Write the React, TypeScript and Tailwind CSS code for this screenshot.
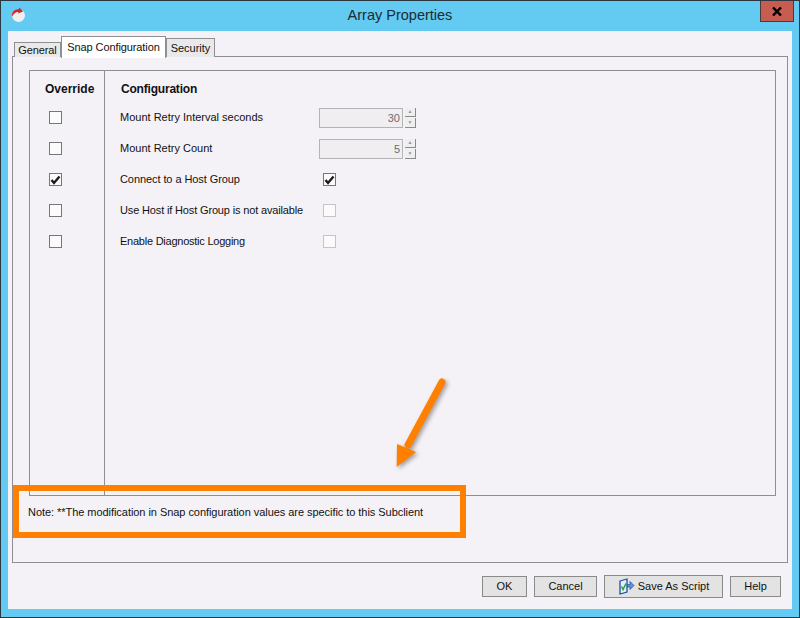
const font = "font-['Liberation_Sans',sans-serif]";

const Box = ({ checked, disabled }: { checked?: boolean; disabled?: boolean }) => (
  <div
    className={`w-[13px] h-[13px] flex items-center justify-center border bg-[#fbfbfb] ${
      disabled ? "border-[#c4c4c6]" : "border-[#77777a]"
    }`}
  >
    {checked && (
      <svg width="11" height="10" viewBox="0 0 11 10">
        <path d="M1.500 5l2.500 3L9.500 1.500" fill="none" stroke="#1c1c1c" strokeWidth="2.400" />
      </svg>
    )}
  </div>
);

const Spinner = ({ value }: { value: string }) => (
  <div className="flex items-center gap-[2px]">
    <div className="w-[84px] h-[20px] border border-[#b4b4b4] bg-[#f0eef1] text-right pr-[2px] text-[#6d6d6d] text-[11px] leading-[18px]">
      {value}
    </div>
    <div className="flex flex-col w-[11px] h-[20px] gap-px">
      <div className="flex-1 bg-[#efefef] border-r border-b border-[#8a8a8a] flex items-center justify-center text-[5px] leading-none text-[#999]">
        ▲
      </div>
      <div className="flex-1 bg-[#efefef] border-r border-b border-[#8a8a8a] flex items-center justify-center text-[5px] leading-none text-[#999]">
        ▼
      </div>
    </div>
  </div>
);

const rows = [
  { label: "Mount Retry Interval seconds", control: <Spinner value="30" /> },
  { label: "Mount Retry Count", control: <Spinner value="5" /> },
  {
    label: "Connect to a Host Group",
    track: "tracking-[-0.08px]",
    override: true,
    control: <div className="ml-[4px]"><Box checked /></div>,
  },
  {
    label: "Use Host if Host Group is not available",
    track: "tracking-[-0.15px]",
    control: <div className="ml-[4px]"><Box disabled /></div>,
  },
  {
    label: "Enable Diagnostic Logging",
    track: "tracking-[-0.24px]",
    control: <div className="ml-[4px]"><Box disabled /></div>,
  },
];

const Btn = ({ children, className }: { children: React.ReactNode; className: string }) => (
  <div
    className={`flex items-center justify-center gap-[3px] bg-[#e3e3e3] border border-[#8a8a8a] text-[11px] text-[#111] ${className}`}
  >
    {children}
  </div>
);

export default function App() {
  return (
    <div
      className={`${font} relative w-[800px] h-[618px] bg-[#63cbf1] border border-[#2a3640] overflow-hidden flex flex-col text-[#111]`}
    >
      {/* title bar */}
      <div className="relative h-[30px] flex items-center justify-center shrink-0">
        <svg className="absolute left-[10px] top-[6px]" width="15" height="16" viewBox="0 0 15 16">
          <circle cx="7.500" cy="8.500" r="6.500" fill="#f1eeee" />
          <path d="M1 9.500C.5 5 3.500 2 8 2L8.500.5 12 4.500 7 6.500 7.500 5C5 4.500 3 6.500 1 9.500Z" fill="#d5252b" />
        </svg>
        <span className="text-[14.500px] text-[#1d2a33] pb-px">Array Properties</span>
        <div className="absolute right-[5px] top-0 w-[34px] h-[21px] bg-[#c75c50] border border-[#4a3a3a] border-t-0 flex items-center justify-center">
          <svg width="10" height="9" viewBox="0 0 10 9">
            <path d="M1 .5l8 8M9 .5l-8 8" stroke="#000" strokeWidth="2.400" />
          </svg>
        </div>
      </div>

      {/* window body */}
      <div className="mx-[7px] h-[579px] bg-[#f5f2f7] border-b border-[#a9b4bc] px-[4px] pt-[5px] flex flex-col shrink-0">
        <div className="flex items-end h-[21px] pl-[2px] text-[11px] relative z-10 -mb-px">
          <div className="h-[15px] w-[47px] border border-b-0 border-[#8e8e94] bg-[#e9e9e9] flex items-center justify-center tracking-[-0.1px]">
            General
          </div>
          <div className="h-[22px] w-[105px] border border-b-0 border-[#8e8e94] bg-white flex items-start pt-[2px] justify-center -mb-px tracking-[-0.1px]">
            Snap Configuration
          </div>
          <div className="h-[19px] w-[49px] border border-b-0 border-[#8e8e94] bg-[#e9e9e9] flex items-center justify-center">
            Security
          </div>
        </div>

        <div className="h-[507px] w-[776px] border border-[#8e8e94] px-[16px] pt-[13px] flex flex-col">
          {/* override / configuration table */}
          <div className="h-[426px] w-[747px] border border-[#8e8e94] flex shrink-0">
            <div className="w-[75px] border-r border-[#8e8e94] flex flex-col items-start pl-[15px] shrink-0">
              <div className="h-[31px] pt-[10px] leading-[16px] text-[12px] font-bold">Override</div>
              <div className="flex flex-col pl-[4px]">
                {rows.map((r) => (
                  <div key={r.label} className="h-[31px] flex items-center">
                    <Box checked={r.override} />
                  </div>
                ))}
              </div>
            </div>
            <div className="flex-1 pl-[15px]">
              <div className="h-[31px] pt-[10px] pl-px leading-[16px] text-[12px] font-bold tracking-[-0.2px]">Configuration</div>
              {rows.map((r) => (
                <div key={r.label} className="h-[31px] flex items-center text-[11px]">
                  <span className={`w-[199px] shrink-0 whitespace-nowrap ${r.track ?? ""}`}>{r.label}</span>
                  {r.control}
                </div>
              ))}
            </div>
          </div>
          <div className="mt-[7px] -ml-px text-[11px] h-[18px] flex items-center tracking-[-0.05px]">
            Note: **The modification in Snap configuration values are specific to this Subclient
          </div>
        </div>

        {/* bottom buttons */}
        <div className="flex items-center justify-end h-[46px] pr-[7px] gap-[7px]">
          <Btn className="w-[45px] h-[21px]">OK</Btn>
          <Btn className="w-[63px] h-[21px]">Cancel</Btn>
          <Btn className="w-[119px] h-[23px]">
            <svg width="17" height="17" viewBox="0 0 17 17">
              <path d="M2 3l7-2v13l-7 2z" fill="#dff0fa" stroke="#1f4f9c" strokeWidth="1.300" />
              <path d="M3.500 8.500l1.500 3L8 5.500" fill="none" stroke="#2ca02c" strokeWidth="1.500" />
              <path d="M9.500 6.500h2.500V3.500l4 4-4 4V9H9.500z" fill="#5b93d9" stroke="#1f4f9c" strokeWidth=".7" />
            </svg>
            Save As Script
          </Btn>
          <Btn className="w-[51px] h-[21px]">Help</Btn>
        </div>
      </div>

      {/* annotation drawn over the dialog */}
      <div className="absolute left-[12px] top-[484px] w-[453px] h-[53px] border-[6px] border-[#ff8000]" />
      <svg
        className="absolute left-[385px] top-[370px] drop-shadow-[2px_2px_2px_rgba(0,0,0,0.35)]"
        width="70"
        height="110"
        viewBox="0 0 70 110"
      >
        <path d="M56 11L22 74" stroke="#ff8000" strokeWidth="7" strokeLinecap="round" />
        <path d="M10.700 96L11 73L30 81Z" fill="#ff8000" />
      </svg>
    </div>
  );
}
